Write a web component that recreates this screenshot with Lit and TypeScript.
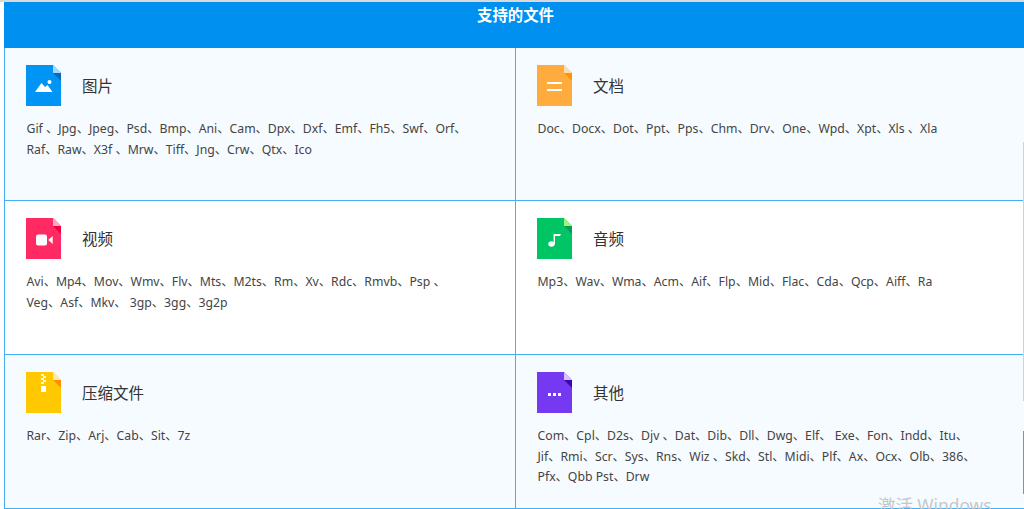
import { LitElement, html, css, svg } from "lit";
import { customElement } from "lit/decorators.js";

type Cell = { title: string; text: string[]; body: string; fold: string; dark: string; glyph: any; alt: boolean };

const cells: Cell[] = [
  { title: "图片", alt: true, body: "#0094f5", fold: "#a6d8fb", dark: "#0a69b8",
    text: ["Gif 、Jpg、Jpeg、Psd、Bmp、Ani、Cam、Dpx、Dxf、Emf、Fh5、Swf、Orf、", "Raf、Raw、X3f 、Mrw、Tiff、Jng、Crw、Qtx、Ico"],
    glyph: svg`<path d="M9 27 L15.5 18 L19 22 L21.5 20 L26.5 27 Z" fill="#fff"/><circle cx="23.5" cy="17" r="2" fill="#fff"/>` },
  { title: "文档", alt: true, body: "#ffab3e", fold: "#ffdca8", dark: "#ff9500",
    text: ["Doc、Docx、Dot、Ppt、Pps、Chm、Drv、One、Wpd、Xpt、Xls 、Xla"],
    glyph: svg`<rect x="10" y="17" width="15" height="2" fill="#fff"/><rect x="10" y="24" width="15" height="2" fill="#fff"/>` },
  { title: "视频", alt: false, body: "#ff2a63", fold: "#ffa6c0", dark: "#f0003c",
    text: ["Avi、Mp4、Mov、Wmv、Flv、Mts、M2ts、Rm、Xv、Rdc、Rmvb、Psp 、", "Veg、Asf、Mkv、 3gp、3gg、3g2p"],
    glyph: svg`<rect x="10" y="16.5" width="11" height="11" rx="2" fill="#fff"/><path d="M22.3 22 L26.7 18 V26 Z" fill="#fff"/>` },
  { title: "音频", alt: false, body: "#00c565", fold: "#a8f07a", dark: "#0a9a55",
    text: ["Mp3、Wav、Wma、Acm、Aif、Flp、Mid、Flac、Cda、Qcp、Aiff、Ra"],
    glyph: svg`<ellipse cx="14.5" cy="26" rx="3.2" ry="2.8" fill="#fff"/><path d="M16.6 26 V16 H18 V26 Z" fill="#fff"/><path d="M17.5 16 H24 L23 18 H17.5 Z" fill="#fff"/>` },
  { title: "压缩文件", alt: true, body: "#ffc800", fold: "#ffe9a0", dark: "#ff8f00",
    text: ["Rar、Zip、Arj、Cab、Sit、7z"],
    glyph: svg`<path d="M15 2 h3 v2 h-3z M17 4 h3 v2 h-3z M15 6 h3 v2 h-3z M17 8 h3 v2 h-3z M15 10 h3 v2 h-3z" fill="#fff" opacity=".85"/><rect x="15" y="14" width="5" height="6" fill="#fff"/>` },
  { title: "其他", alt: true, body: "#7539f2", fold: "#d6c3fa", dark: "#3a0ba8",
    text: ["Com、Cpl、D2s、Djv 、Dat、Dib、Dll、Dwg、Elf、 Exe、Fon、Indd、Itu、", "Jif、Rmi、Scr、Sys、Rns、Wiz 、Skd、Stl、Midi、Plf、Ax、Ocx、Olb、386、", "Pfx、Qbb Pst、Drw"],
    glyph: svg`<rect x="11" y="21" width="3" height="3" fill="#fff"/><rect x="16" y="21" width="3" height="3" fill="#fff"/><rect x="21" y="21" width="3" height="3" fill="#fff"/>` },
];

@customElement("app-root")
export class AppRoot extends LitElement {
  static styles = css`
    :host {
      display: block;
      width: 1024px;
      height: 509px;
      position: relative;
      overflow: hidden;
      background: #fff;
      font-family: "Noto Sans", "Noto Sans CJK SC", sans-serif;
    }
    .top { height: 2px; background: #d9d9d9; }
    .panel { margin-left: 4px; display: flex; flex-direction: column; }
    .head {
      height: 46px;
      background: #0090f0;
      color: #fff;
      font-size: 15.4px;
      font-weight: 700;
      line-height: 27px;
      text-align: center;
      padding-left: 3px;
      box-sizing: border-box;
    }
    .grid {
      display: grid;
      grid-template-columns: 510px 1fr;
      grid-template-rows: 152px 154px 154px;
      border-left: 1px solid #45aef5;
      border-bottom: 1px solid #45aef5;
    }
    .cell {
      padding: 17px 0 0 21px;
      border-top: 1px solid #45aef5;
      box-sizing: border-box;
      background: #fff;
    }
    .cell.first { border-top: none; }
    .cell.alt { background: #f6fbff; }
    .cell.right { border-left: 1px solid #45aef5; }
    .title-row { display: flex; align-items: center; gap: 21px; height: 41px; }
    .icon { width: 35px; height: 41px; display: block; }
    .title { font-size: 15.5px; color: #333; font-weight: 400; }
    .text {
      margin: 13px 0 0 0.5px;
      font-size: 12.25px;
      line-height: 20.5px;
      color: #444;
      white-space: nowrap;
    }
    .line { display: block; }
    .wm {
      position: absolute;
      left: 878px;
      top: 493px;
      font-size: 17.4px;
      line-height: 24px;
      color: #c4c8cc;
      white-space: nowrap;
    }
    .edge { position: absolute; right: 0; width: 1px; }
    .e1 { top: 142px; height: 259px; background: #c9d4dc; }
    .e2 { top: 431px; height: 63px; background: #5a9fd0; }
  `;

  private icon(c: Cell) {
    return html`<svg class="icon" viewBox="0 0 35 41" aria-hidden="true">
      <path d="M0 0 H27 L35 8 V41 H0 Z" fill="${c.body}"/>
      <path d="M27 0 L35 8 H27 Z" fill="${c.fold}"/>
      <path d="M27 8 H35 V16 Z" fill="${c.dark}"/>
      ${c.glyph}
    </svg>`;
  }

  render() {
    return html`
      <div class="top"></div>
      <div class="panel">
        <div class="head">支持的文件</div>
        <div class="grid">
          ${cells.map((c, i) => html`
            <div class="cell ${c.alt ? "alt" : ""} ${i % 2 ? "right" : ""} ${i < 2 ? "first" : ""}">
              <div class="title-row">${this.icon(c)}<span class="title">${c.title}</span></div>
              <div class="text">${c.text.map((t) => html`<span class="line">${t}</span>`)}</div>
            </div>`)}
        </div>
      </div>
      <div class="wm">激活 Windows</div>
      <div class="edge e1"></div>
      <div class="edge e2"></div>
    `;
  }
}
